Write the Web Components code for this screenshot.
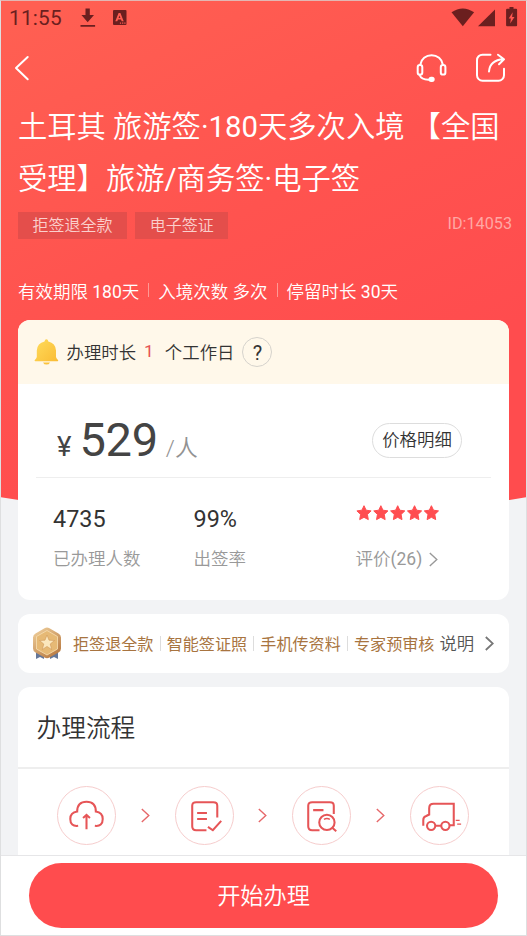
<!DOCTYPE html>
<html lang="zh-CN">
<head>
<meta charset="utf-8">
<title>签证详情</title>
<style>
body{margin:0;font-family:Roboto,"Noto Sans CJK SC",sans-serif;color:#333}
</style>
</head>
<body>
<visa-page></visa-page>
<script>
const define = (name, html) => {
  const t = document.createElement('template');
  t.innerHTML = html;
  customElements.define(name, class extends HTMLElement {
    constructor() {
      super();
      this.attachShadow({ mode: 'open' }).append(t.content.cloneNode(true));
    }
  });
};

define('status-bar', `
<style>
:host{display:flex;height:34px;color:#6b1f1f;position:relative}
.time{font-size:20.800px;line-height:35px;margin-left:8px;width:71px;white-space:nowrap;letter-spacing:.2px}
svg{display:block;fill:currentColor}
.right{margin-left:auto}
</style>
<span class="time">11:55</span>
<svg width="60" height="34" viewBox="80 1 60 34"><path d="M85.500 8.500h4.300v6.500h4.200l-6.300 7.200-6.300-7.200h4.100zM80.500 25h14.600v1.700h-14.600z"/>
<path fill-rule="evenodd" d="M114 10h11.500q1 0 1 1v13q0 1-1 1h-11.500q-1 0-1-1v-13q0-1 1-1zM118.600 13l-3.300 8.300h2l.7-1.800h3l.7 1.800h2l-3.300-8.300zm.9 2.400.9 2.600h-1.800zM119.900 22.600v1.200h1.200v-1.200zm2.200 0v1.200h1.200v-1.200zm2.200 0v1.200h1.200v-1.200z"/></svg>
<svg class="right" width="76" height="34" viewBox="450 1 76 34"><path d="M451.500 12.300q11.300-7.600 22.600 0l-11.300 14z"/><path d="M495 9.600v16.600h-17z"/><path fill-rule="evenodd" d="M509.500 7h4v1.800h2.600q1 0 1 1v15.400q0 1-1 1h-9q-1 0-1-1v-15.400q0-1 1-1h2.400zm3.200 5.200-4 6.300h2.200l-.7 5 4.300-6.600h-2.400z"/></svg>`);

define('nav-bar', `
<style>
:host{display:flex;height:66px}
svg{display:block;fill:none;stroke:#fff;stroke-width:2;stroke-linecap:round;stroke-linejoin:round}
.right{margin-left:auto}
</style>
<svg width="60" height="65" viewBox="1 35 60 65"><path d="M27.700 57 16 68l11.700 11.200"/></svg>
<svg class="right" width="126" height="65" viewBox="400 35 126 65">
<path d="M420.400 64.500a11.300 10.800 0 0 1 22.400 0M419.500 75q2 5 10 4.600"/><rect x="417.700" y="65" width="4.600" height="9.600" rx="2.200"/><rect x="440.800" y="65" width="4.600" height="9.600" rx="2.200"/><rect x="429.500" y="77.700" width="4.200" height="3.200" rx="1.600" fill="#fff"/>
<path d="M490.500 54.700h-8a5.500 5.500 0 0 0-5.500 5.500v15a5.500 5.500 0 0 0 5.500 5.500h16a5.500 5.500 0 0 0 5.500-5.500v-6.500M489 71.500q1-11.500 14.500-12.200M498 54.700l6 4.600-5 5"/></svg>`);

define('page-title', `
<style>
:host{display:block;margin-left:17px;font-size:29.300px;line-height:52px;height:111px;color:#fff;white-space:nowrap;font-weight:350}
</style><slot></slot>`);

define('flag-tag', `
<style>
:host{display:block;height:27px;line-height:28px;padding:0 14.600px;background:#e44e4b;color:#fbd0cd;font-size:16px;margin-right:8px;white-space:nowrap;font-weight:350}
</style><slot></slot>`);

define('tag-row', `
<style>
:host{display:flex;height:68px;margin:0 14px 0 17px;align-items:flex-start}
.id{margin-left:auto;font-size:16.200px;line-height:24px;color:#ffa7a4}
</style><slot></slot><span class="id"><slot name="id"></slot></span>`);

define('facts-row', `
<style>
:host{display:flex;height:40px;margin-left:17px;line-height:24px;font-size:17.500px;color:#fff;white-space:nowrap;font-weight:350}
::slotted(i){width:1px;height:14px;margin:3px 9px 0 9px;background:#ff9995}
</style><slot></slot>`);

define('line-chevron', `
<style>:host{display:block;flex:none}svg{display:block;fill:none;stroke:currentColor;stroke-width:var(--w,1.400)}</style>
<svg width="9" height="15" viewBox="0 0 9 15"><path d="M.8 1 7.800 7.500.8 14"/></svg>`);

define('white-card', `
<style>:host{display:block;box-sizing:border-box;background:#fff;border-radius:12px;margin:0 17px 14px;overflow:hidden}</style><slot></slot>`);

define('time-strip', `
<style>
:host{display:flex;height:64px;background:#fff8ea;align-items:center;font-size:17.400px;white-space:nowrap;font-weight:350}
span,b{position:relative;top:-1px}
svg{display:block;margin:0 7.500px 0 16px}
b{color:#e65353;font-weight:400;margin:0 11px 0 8px}
.q{top:0;box-sizing:border-box;width:30px;height:30px;border:1px solid #d5d2cc;border-radius:50%;text-align:center;line-height:30px;font-size:20px;margin-left:8px;font-weight:400}
</style>
<svg width="25" height="26" viewBox="0 0 25 26"><defs><linearGradient id="g" x2="1" y2="1"><stop stop-color="#ffdc5c"/><stop offset="1" stop-color="#f9b931"/></linearGradient></defs><path fill="url(#g)" d="M10.500 2.500q.3-2.200 1.900-2.200t1.900 2.200q7.200 1.500 7.700 9v6.500q.3 1.700 2 3 .8 1.200-.6 1.200h-22q-1.400 0-.6-1.200 1.700-1.300 2-3v-6.500q.5-7.500 7.700-9zM9 23.400h7q-1 2.200-3.500 2.200t-3.500-2.200z"/></svg>
<span>办理时长</span><b>1</b><span>个工作日</span><span class="q">?</span>`);

define('price-row', `
<style>
:host{display:flex;height:93px;margin:0 18px;border-bottom:1.500px solid #eee;align-items:flex-start;white-space:nowrap;color:#444}
.p{display:flex;align-items:baseline;line-height:60px;margin:26px 0 0 21px;font-size:47px;letter-spacing:-.3px}
.y{font-size:27.500px;width:22.500px}
.u{font-size:22.800px;color:#929292;margin-left:8px;font-weight:350;letter-spacing:.2px}
.btn{box-sizing:border-box;margin:39px 29px 0 auto;width:90px;height:35px;border:1.500px solid #ddd;border-radius:18px;text-align:center;font-size:17.400px;line-height:33px;font-weight:350;color:#333}
</style>
<div class="p"><span class="y">¥</span><span>529</span><span class="u">/人</span></div><div class="btn">价格明细</div>`);

define('stat-grid', `
<style>
:host{display:grid;grid-template-columns:140.500px 162px 1fr;height:121px;padding-left:35px;white-space:nowrap}
.n{height:47px;padding-top:25px;line-height:32px;font-size:23.400px;box-sizing:border-box;color:#333}
.l{font-size:17.500px;line-height:24px;padding-top:22px;color:#999;font-weight:350;display:flex;align-items:center}
.l b{font-weight:400}
svg{display:block;margin-top:1px}
line-chevron{margin:0 0 0 7px}
</style>
<div><div class="n">4735</div><div class="l">已办理人数</div></div>
<div><div class="n">99%</div><div class="l">出签率</div></div>
<div><div class="n"><svg width="86" height="18" viewBox="0 0 86 18"><defs><path id="s" fill="#ff4d50" stroke="#ff4d50" stroke-linejoin="round" d="M8 1.700l2.100 4.500 5 .7-3.700 3.500.9 5.200L8 13.300l-4.300 2.300.9-5.200L.9 6.900l5-.7z"/></defs><use href="#s"/><use href="#s" x="16.850"/><use href="#s" x="33.700"/><use href="#s" x="50.550"/><use href="#s" x="67.400"/></svg></div><div class="l">评价<b>(26)</b><line-chevron></line-chevron></div></div>`);

define('perk-row', `
<style>
:host{display:flex;height:59px;align-items:center;font-size:16.100px;color:#a87440;white-space:nowrap}
.m{display:block;margin:0 10.500px 0 13.500px}
span{position:relative;top:-1px}
i{width:1px;height:15px;background:#ddd;margin:0 6.100px}
.e{font-size:17.400px;color:#555;margin-left:5px;font-weight:350}
line-chevron{color:#777;margin-left:10.500px;--w:1.800}
</style>
<svg class="m" width="31" height="34" viewBox="0 0 31 34"><defs><linearGradient id="m" x2=".7" y2="1"><stop stop-color="#f3d5a2"/><stop offset="1" stop-color="#b97b43"/></linearGradient></defs><path fill="#657798" d="M4 22h8v10l-4-2-4 2zM18 22h8v10l-4-2-4 2z"/><path fill="url(#m)" d="M12.500 1.200q2.500-1.400 5 0l9 5.200q2.500 1.400 2.500 4v11q0 2.600-2.500 4l-9 5.200q-2.500 1.400-5 0l-9-5.200q-2.500-1.400-2.500-4v-11q0-2.600 2.500-4z"/><path fill="#e6b975" stroke="#f7dfb2" stroke-width=".8" d="M15 3.500 25.500 9.500v12.500L15 28 4.500 22V9.500z"/><path fill="#fbe7bd" stroke="#c98f50" stroke-width=".5" d="M15 8l2 5.200 5.500.3-4.300 3.500 1.500 5.500-4.700-3.100-4.700 3.100 1.500-5.500-4.300-3.500 5.500-.3z"/></svg>
<span>拒签退全款</span><i></i><span>智能签证照</span><i></i><span>手机传资料</span><i></i><span>专家预审核</span><span class="e">说明</span><line-chevron></line-chevron>`);

define('step-icon', `
<style>
:host{display:block;box-sizing:border-box;width:59px;height:59px;border:1px solid #f6cdcd;border-radius:50%;flex:none}
::slotted(svg){display:block;width:57px;height:57px;fill:none;stroke:#e65557;stroke-width:2.100}
</style><slot></slot>`);

define('process-card', `
<style>
:host{display:block;height:200px}
.h{height:80px;line-height:84px;font-size:24.700px;padding-left:18.500px;border-bottom:2px solid #eee;font-weight:350}
.s{display:flex;justify-content:space-between;align-items:center;padding:17px 40.500px 0 39px;color:#e6686a}
line-chevron{--w:1.400}
</style>
<div class="h">办理流程</div>
<div class="s">
<step-icon><svg viewBox="-29 -29 58 58"><path d="M-8.500 10.500q-8 1-8-7 0-6.500 7-7.500 0-10 9.500-10t9.500 10q7 1 7 7.500 0 8-8 7M0 14V0M-3.500 2.500 0-.7 3.500 2.500"/></svg></step-icon>
<line-chevron></line-chevron>
<step-icon><svg viewBox="-29 -29 58 58"><path d="M2 15h-10.500q-4 0-4-4v-21q0-3.500 4-3.500h17.500q4 0 4 3.500v12M-7.500-2.500H2.500M-7.500 3.500H2.500M3.500 11.500l5 3.500 8.500-9.500"/></svg></step-icon>
<line-chevron></line-chevron>
<step-icon><svg viewBox="-29 -29 58 58"><path d="M-2 15h-7.500q-4 0-4-4v-21q0-3.500 4-3.500h18q4 0 4 3.500v8.500M-8.500-5.500H2M11 12.500l4 3.500"/><circle cx="5.500" cy="7" r="7.800"/><path stroke-width="1.500" d="M2.500 4q3-2 6 0"/></svg></step-icon>
<line-chevron></line-chevron>
<step-icon><svg viewBox="-29 -29 58 58"><path d="M-16.500 10.500V4.500q0-3 3-4l3-1.500V-7.500q0-4.500 4.500-4.500H14.500V10H10.500M-4 10.500H2"/><circle cx="-8.500" cy="10.500" r="4.200"/><circle cx="6" cy="10.500" r="4.200"/><path stroke-width="1.300" d="M16.500 5h4M18 8.800h4"/></svg></step-icon>
</div>`);

define('action-bar', `
<style>
:host{display:block;box-sizing:border-box;height:80px;background:#fff;border-top:1px solid #e6e6e8;padding:7px 28px 0;position:absolute;left:0;right:0;bottom:0}
div{height:65px;border-radius:33px;background:#ff4c4e;color:#fff;text-align:center;font-size:23.200px;line-height:67px;font-weight:350}
</style><div><slot></slot></div>`);

define('visa-page', `
<style>
:host{display:block;box-sizing:border-box;width:527px;height:936px;border:1px solid #dedfe0;border-top-color:#e2b7b3;overflow:hidden;position:relative;background:#f2f3f5}
.bg{position:absolute;left:0;top:0;display:block}
main{position:relative;height:934px;overflow:hidden}
page-title div{height:52px}
b{font-weight:400}
</style>
<svg class="bg" width="525" height="520" viewBox="0 0 525 520"><defs><linearGradient id="r" gradientUnits="userSpaceOnUse" x1="60" y1="0" x2="270" y2="440"><stop stop-color="#ff5f52"/><stop offset=".55" stop-color="#ff534f"/><stop offset="1" stop-color="#ff4c4e"/></linearGradient></defs><path fill="url(#r)" d="M0 0H525V496.300Q262.500 541 0 496.300z"/></svg>
<main>
<status-bar></status-bar>
<nav-bar></nav-bar>
<page-title><div>土耳其 旅游签<b>·180</b>天多次入境 【全国</div><div>受理】旅游<b>/</b>商务签<b>·</b>电子签</div></page-title>
<tag-row><flag-tag>拒签退全款</flag-tag><flag-tag>电子签证</flag-tag><span slot="id">ID:14053</span></tag-row>
<facts-row><span>有效期限 <b>180</b>天</span><i></i><span>入境次数 多次</span><i></i><span>停留时长 <b>30</b>天</span></facts-row>
<white-card style="height:280px"><time-strip></time-strip><price-row></price-row><stat-grid></stat-grid></white-card>
<white-card style="height:59px"><perk-row></perk-row></white-card>
<white-card><process-card></process-card></white-card>
</main>
<action-bar>开始办理</action-bar>`);
</script>
</body>
</html>
